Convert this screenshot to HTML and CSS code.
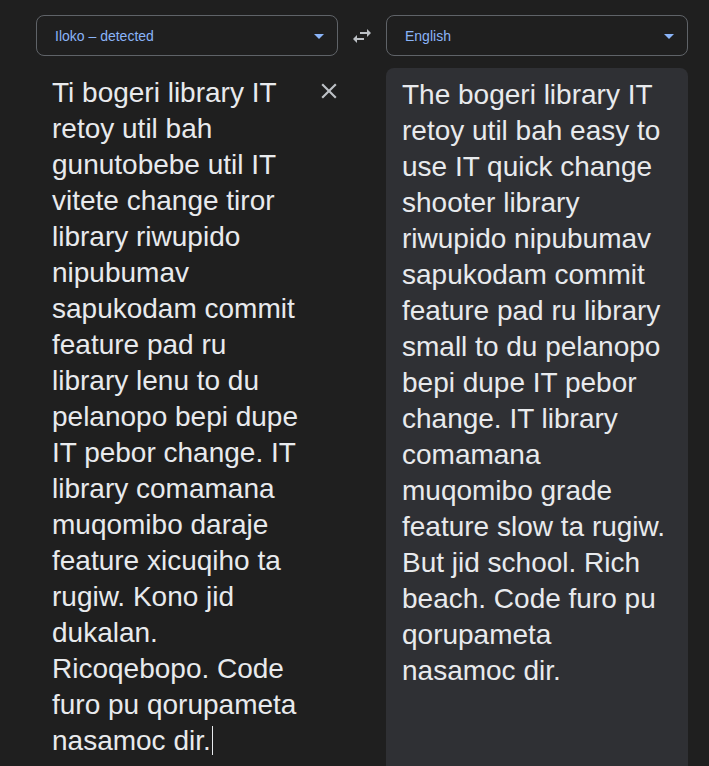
FILE: index.html
```html
<!DOCTYPE html>
<html lang="en">
<head>
<meta charset="utf-8">
<title>Translate</title>
<link rel="stylesheet" href="styles.css">
</head>
<body>
<div class="app">
  <div class="bar">
    <div class="select">
      <span class="label">Iloko – detected</span>
      <span class="caret-down"></span>
    </div>
    <div class="swap">
      <svg width="24" height="24" viewBox="0 0 24 24"><path fill="#bdc1c6" d="M6.99 11L3 15l3.99 4v-3H14v-2H6.99v-3zM21 9l-3.99-4v3H10v2h7.01v3L21 9z"/></svg>
    </div>
    <div class="select">
      <span class="label">English</span>
      <span class="caret-down"></span>
    </div>
  </div>
  <div class="panes">
    <div class="source">
      <div class="source-text">Ti bogeri library IT retoy util bah gunutobebe util IT vitete change tiror library riwupido nipubumav sapukodam commit feature pad ru library lenu to du pelanopo bepi dupe IT pebor change. IT library comamana muqomibo daraje feature xicuqiho ta rugiw. Kono jid dukalan. Ricoqebopo. Code furo pu qorupameta nasamoc dir.<span class="cursor"></span></div>
      <button class="clear" aria-label="Clear">
        <svg width="26" height="26" viewBox="0 0 24 24"><path fill="#bdc1c6" d="M19 6.41L17.59 5 12 10.59 6.41 5 5 6.41 10.59 12 5 17.59 6.41 19 12 13.41 17.59 19 19 17.59 13.41 12z"/></svg>
      </button>
    </div>
    <div class="target">
      <div class="target-text">The bogeri library IT retoy util bah easy to use IT quick change shooter library riwupido nipubumav sapukodam commit feature pad ru library small to du pelanopo bepi dupe IT pebor change. IT library comamana muqomibo grade feature slow ta rugiw. But jid school. Rich beach. Code furo pu qorupameta nasamoc dir.</div>
    </div>
  </div>
</div>
</body>
</html>
```
FILE: styles.css
```css
html, body {
  margin: 0;
  padding: 0;
  background: #1f1f1f;
  height: 100%;
  overflow: hidden;
}
body {
  font-family: "Liberation Sans", Arial, sans-serif;
  color: #e8eaed;
}
.app {
  padding: 15px 21px 0 36px;
}
.bar {
  display: grid;
  grid-template-columns: 302px 48px 302px;
  align-items: center;
  height: 41px;
}
.select {
  box-sizing: border-box;
  height: 41px;
  border: 1px solid #5f6368;
  border-radius: 8px;
  display: flex;
  align-items: center;
  justify-content: space-between;
  padding: 0 13px 0 18px;
}
.label {
  font-size: 14px;
  color: #8ab4f8;
}
.caret-down {
  width: 0;
  height: 0;
  border-left: 5px solid transparent;
  border-right: 5px solid transparent;
  border-top: 5px solid #8ab4f8;
  margin-top: 2px;
}
.swap {
  display: flex;
  justify-content: center;
  align-items: center;
}
.swap svg { display: block; }
.panes {
  display: grid;
  grid-template-columns: 302px 302px;
  column-gap: 48px;
  margin-top: 12px;
}
.source {
  display: flex;
  align-items: flex-start;
  padding: 7px 0 0 16px;
}
.source-text, .target-text {
  font-size: 28px;
  line-height: 36px;
  color: #e8eaed;
}
.source-text {
  width: 258px;
  flex: none;
}
.cursor {
  display: inline-block;
  width: 1px;
  height: 29px;
  background: #e8eaed;
  vertical-align: -5px;
  margin-left: 1px;
}
.clear {
  background: none;
  border: none;
  padding: 0;
  margin: 3px 0 0 6px;
  cursor: pointer;
}
.clear svg { display: block; }
.target {
  background: #2f3034;
  border-radius: 8px 8px 0 0;
  padding: 9px 16px 0 16px;
  min-height: 720px;
}
```
